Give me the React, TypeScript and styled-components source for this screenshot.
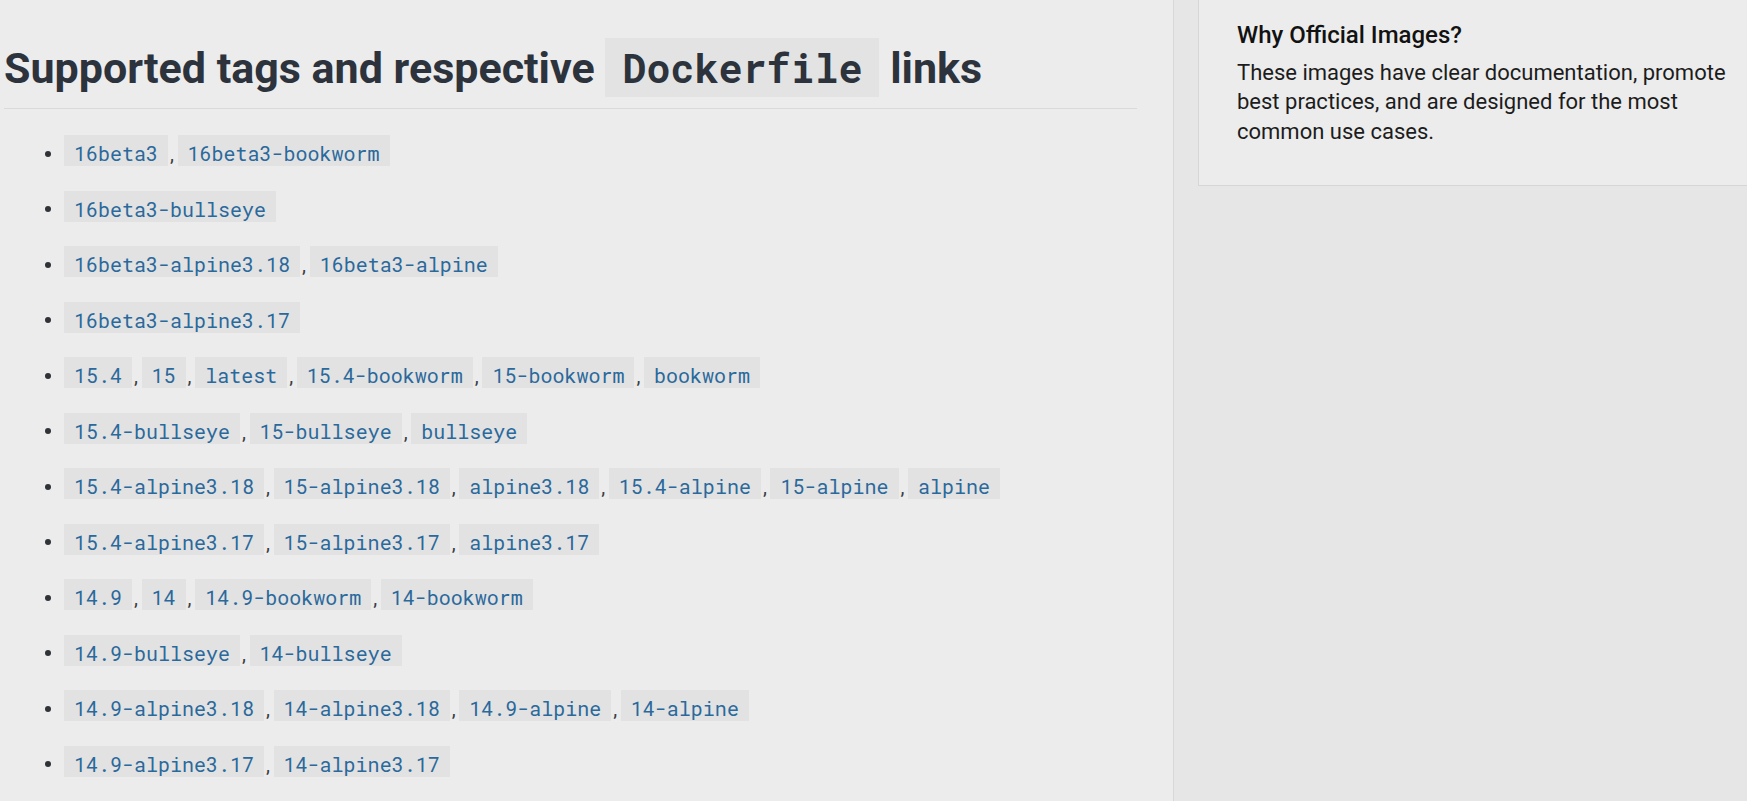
import React from "react";
import styled, { createGlobalStyle } from "styled-components";

const Global = createGlobalStyle`
  html, body {
    margin: 0;
    padding: 0;
    background: #ececec;
    overflow: hidden;
  }
  body {
    font-family: Roboto, "Noto Sans", Arial, sans-serif;
    color: #2b2f33;
  }
`;

const Page = styled.div`
  display: flex;
  width: 1747px;
  height: 801px;
  overflow: hidden;
`;

const Main = styled.main`
  flex: none;
  width: 1173px;
  box-sizing: border-box;
  padding: 0 36px 0 4px;
  background: #ececec;
`;

const Title = styled.h1`
  margin: 38px 0 0;
  padding-bottom: 10px;
  border-bottom: 1px solid #dadada;
  font-family: Roboto, sans-serif;
  font-weight: 700;
  font-size: 43px;
  line-height: 60px;
  color: #2c333c;
  white-space: nowrap;
`;

const TitleCode = styled.code`
  display: inline-block;
  padding: 6px 17px;
  font-family: "Roboto Mono", "DejaVu Sans Mono", monospace;
  font-weight: 700;
  font-size: 40px;
  line-height: 47px;
  background: #e3e3e3;
  color: #2c333c;
`;

const TagList = styled.ul`
  list-style: none;
  margin: 30.7px 0 0;
  padding: 0 0 0 40.7px;
  display: flex;
  flex-direction: column;
  gap: 27.5px;
`;

const TagItem = styled.li`
  display: flex;
  align-items: center;
  height: 28px;

  &::before {
    content: "";
    flex: none;
    width: 6px;
    height: 6px;
    border-radius: 50%;
    background: #2f3338;
    margin-right: 13.3px;
  }
`;

const Tags = styled.span`
  font-size: 20px;
  line-height: 28px;
  color: #3a3f44;
  white-space: nowrap;
`;

const Tag = styled.code`
  padding: 5px 10px 0;
  font-family: "Roboto Mono", "DejaVu Sans Mono", monospace;
  font-size: 20px;
  background: #e2e2e2;
  color: #2a699c;
`;

const Comma = styled.span`
  display: inline-block;
  width: 9.6px;
  padding-left: 2px;
  box-sizing: border-box;
`;

const Sidebar = styled.aside`
  flex: 1;
  min-width: 0;
  box-sizing: border-box;
  background: #e6e6e6;
  border-left: 1px solid #d8d8d8;
  padding-left: 24px;
  overflow: hidden;
`;

const Card = styled.section`
  width: 600px;
  box-sizing: border-box;
  background: #ececec;
  border-left: 1px solid #d6d6d6;
  border-bottom: 1px solid #d6d6d6;
  padding: 20px 0 39px 38px;
`;

const CardTitle = styled.h3`
  margin: 0;
  font-weight: 500;
  font-size: 24px;
  line-height: 30px;
  color: #121212;
`;

const CardText = styled.p`
  margin: 7.5px 0 0;
  max-width: 505px;
  font-size: 22px;
  line-height: 29.5px;
  color: #1c1c1c;
`;

const rows: string[][] = [
  ["16beta3", "16beta3-bookworm"],
  ["16beta3-bullseye"],
  ["16beta3-alpine3.18", "16beta3-alpine"],
  ["16beta3-alpine3.17"],
  ["15.4", "15", "latest", "15.4-bookworm", "15-bookworm", "bookworm"],
  ["15.4-bullseye", "15-bullseye", "bullseye"],
  ["15.4-alpine3.18", "15-alpine3.18", "alpine3.18", "15.4-alpine", "15-alpine", "alpine"],
  ["15.4-alpine3.17", "15-alpine3.17", "alpine3.17"],
  ["14.9", "14", "14.9-bookworm", "14-bookworm"],
  ["14.9-bullseye", "14-bullseye"],
  ["14.9-alpine3.18", "14-alpine3.18", "14.9-alpine", "14-alpine"],
  ["14.9-alpine3.17", "14-alpine3.17"],
];

export default function App() {
  return (
    <>
      <Global />
      <Page>
        <Main>
          <Title>
            Supported tags and respective <TitleCode>Dockerfile</TitleCode> links
          </Title>
          <TagList>
            {rows.map((row, i) => (
              <TagItem key={i}>
                <Tags>
                  {row.map((t, j) => (
                    <React.Fragment key={t}>
                      {j > 0 && <Comma>,</Comma>}
                      <Tag>{t}</Tag>
                    </React.Fragment>
                  ))}
                </Tags>
              </TagItem>
            ))}
          </TagList>
        </Main>
        <Sidebar>
          <Card>
            <CardTitle>Why Official Images?</CardTitle>
            <CardText>
              These images have clear documentation, promote best practices, and are designed for the most
              common use cases.
            </CardText>
          </Card>
        </Sidebar>
      </Page>
    </>
  );
}
